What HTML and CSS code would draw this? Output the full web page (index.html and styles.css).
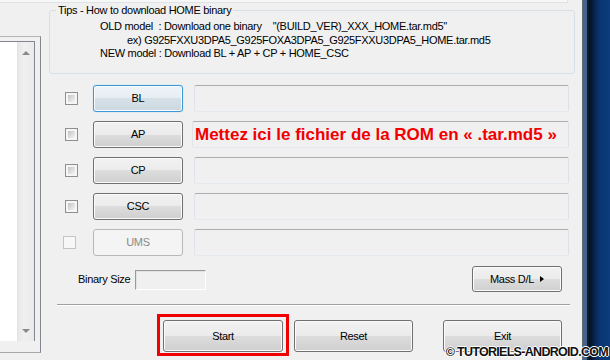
FILE: index.html
```html
<!DOCTYPE html>
<html lang="fr">
<head>
  <meta charset="UTF-8" />
  <title>Odin - Download</title>
  <link rel="stylesheet" href="styles.css">
</head>
<body>
  <div class="app">
    <div class="topbar"><div class="topfield"></div></div>

    <div class="panes">
      <div class="side">
        <div class="side-frame">
          <div class="listbox">
            <div class="list-body"></div>
            <div class="scrollbar">
              <span class="arrow up"></span>
              <span class="arrow down"></span>
            </div>
          </div>
        </div>
      </div>

      <div class="main">
        <fieldset class="tips">
          <legend>Tips - How to download HOME binary</legend>
          <div class="tip-line">OLD model  : Download one binary    "(BUILD_VER)_XXX_HOME.tar.md5"</div>
          <div class="tip-line indent">ex) G925FXXU3DPA5_G925FOXA3DPA5_G925FXXU3DPA5_HOME.tar.md5</div>
          <div class="tip-line">NEW model : Download BL + AP + CP + HOME_CSC</div>
        </fieldset>

        <div class="files">
          <div class="row">
            <span class="check"></span>
            <button class="btn focus">BL</button>
            <div class="field"></div>
          </div>
          <div class="row">
            <span class="check"></span>
            <button class="btn">AP</button>
            <div class="field note">Mettez ici le fichier de la ROM en « .tar.md5 »</div>
          </div>
          <div class="row">
            <span class="check"></span>
            <button class="btn">CP</button>
            <div class="field"></div>
          </div>
          <div class="row">
            <span class="check"></span>
            <button class="btn">CSC</button>
            <div class="field"></div>
          </div>
          <div class="row">
            <span class="check off"></span>
            <button class="btn" disabled>UMS</button>
            <div class="field"></div>
          </div>
        </div>

        <div class="options">
          <span class="label">Binary Size</span>
          <span class="size-box"></span>
          <button class="btn mass">Mass D/L<span class="tri"></span></button>
        </div>

        <div class="sep"></div>

        <div class="actions">
          <div class="highlight"><button class="btn big">Start</button></div>
          <button class="btn big reset">Reset</button>
          <button class="btn big exit">Exit</button>
        </div>
      </div>
    </div>
  </div>

  <div class="desktop"></div>

  <div class="watermark">© TUTORIELS-ANDROID.COM</div>
</body>
</html>
```

FILE: styles.css
```css
body {
  margin: 0;
  width: 610px;
  height: 360px;
  overflow: hidden;
  display: flex;
  background: #f0f0f0;
  font-family: 'Liberation Sans', Arial, sans-serif;
  font-size: 11px;
  letter-spacing: -0.3px;
  color: #000;
}

.app {
  width: 582px;
  display: flex;
  flex-direction: column;
}

.topbar {
  height: 3px;
}

.topfield {
  width: 568px;
  height: 3px;
  box-sizing: border-box;
  background: #f7f7f7;
  border-bottom: 1px solid #dfe3e8;
  border-right: 1px solid #dfe3e8;
}

.panes {
  flex: 1;
  display: flex;
}

/* left list, mostly cut off */
.side {
  width: 41px;
  padding-top: 33px;
}

.side-frame {
  height: 317px;
  box-sizing: border-box;
  border-top: 1px solid #b5b5b5;
  border-bottom: 1px solid #a7a7a7;
  border-right: 1px solid #828790;
  padding: 4px 5px 11px 0;
  display: flex;
}

.listbox {
  flex: 1;
  display: flex;
  border-top: 1px solid #828790;
  border-right: 1px solid #828790;
  background: #fff;
}

.list-body {
  flex: 1;
}

.scrollbar {
  width: 17px;
  background: linear-gradient(to right, #e8e8e8, #f0f0f0 40%, #eaeaea);
  border-left: 1px solid #e3e3e3;
  display: flex;
  flex-direction: column;
  justify-content: space-between;
  align-items: center;
  padding: 9px 0 8px;
  box-sizing: border-box;
}

.arrow {
  width: 0;
  height: 0;
  border-left: 4px solid transparent;
  border-right: 4px solid transparent;
}

.arrow.up {
  border-bottom: 4px solid #8a8a8a;
}

.arrow.down {
  border-top: 4px solid #8a8a8a;
}

.main {
  width: 541px;
  padding: 0 7px 0 8px;
  box-sizing: border-box;
}

/* tips group */
.tips {
  margin: 0;
  padding: 3px 0 12px;
  border: 1px solid #d5dfe5;
  border-radius: 3px;
}

.tips legend {
  margin-left: 6px;
  padding: 0 2px;
  line-height: 14px;
}

.tip-line {
  white-space: pre;
  line-height: 13.5px;
  padding-left: 50px;
}

.tip-line.indent {
  padding-left: 77px;
}

/* file rows */
.files {
  margin-top: 11px;
  display: flex;
  flex-direction: column;
  gap: 9px;
}

.row {
  height: 27px;
  display: flex;
  align-items: center;
}

.check {
  width: 13px;
  height: 13px;
  margin-left: 16px;
  box-sizing: border-box;
  border: 1px solid #8f8f8f;
  padding: 2px;
  background: linear-gradient(135deg, #c4c4c4, #f4f4f4) content-box, #f6f6f6;
}

.check.off {
  margin-left: 14px;
  margin-right: 2px;
  border-color: #c4c4c4;
  background: #f7f7f7;
}

.btn {
  font-family: 'Liberation Sans', Arial, sans-serif;
  font-size: 11px;
  letter-spacing: -0.3px;
  color: #000;
  padding: 0;
  border: 1px solid #707070;
  border-radius: 3px;
  background: linear-gradient(#f2f2f2, #ebebeb 50%, #dddddd 50%, #cfcfcf);
  box-shadow: inset 0 0 0 1px #fbfbfb;
}

.row .btn {
  width: 90px;
  height: 27px;
  margin-left: 15px;
}

.btn.focus {
  border-color: #3d98d8;
  background: linear-gradient(#eef4f8, #e6eef3 50%, #d6e0e7 50%, #ccd8e1);
  box-shadow: inset 0 0 0 1px #f7fbfd, 0 0 1px #7cc0ee;
}

.btn:disabled {
  border-color: #b5b9bc;
  background: #f4f4f4;
  color: #8a8a8a;
  box-shadow: none;
}

.field {
  width: 375px;
  height: 27px;
  margin-left: 11px;
  box-sizing: border-box;
  border: 1px solid;
  border-color: #abadb3 #dde1e7 #e3e9ef #e2e3ea;
  border-radius: 2px;
  background: #f0f0f0;
}

.field.note {
  margin-left: 9px;
  width: 377px;
  padding-left: 2px;
  color: #f20000;
  font-weight: bold;
  font-size: 17px;
  letter-spacing: 0;
  line-height: 25px;
  white-space: nowrap;
  overflow: hidden;
}

/* binary size + mass download */
.options {
  margin-top: 10px;
  height: 26px;
  display: flex;
  align-items: center;
  padding-left: 29px;
}

.label {
  width: 57px;
}

.size-box {
  width: 71px;
  height: 20px;
  margin-top: 2px;
  box-sizing: border-box;
  border: 1px solid;
  border-color: #9a9a9a #fdfdfd #fdfdfd #9a9a9a;
  box-shadow: inset 1px 1px 0 #e2e2e2;
}

.btn.mass {
  margin-left: auto;
  margin-right: 13px;
  width: 90px;
  height: 26px;
  display: flex;
  align-items: center;
  justify-content: center;
}

.tri {
  margin-left: 6px;
  width: 0;
  height: 0;
  border-left: 4px solid #000;
  border-top: 3px solid transparent;
  border-bottom: 3px solid transparent;
}

.sep {
  margin: 12px 5px 0 8px;
  border-top: 1px solid #a0a0a0;
  border-bottom: 1px solid #fff;
}

/* bottom buttons */
.actions {
  margin-top: 8px;
  padding-left: 108px;
  display: flex;
  align-items: flex-start;
}

.highlight {
  border: 3px solid #f00000;
  padding: 3px 3px 1px;
  display: flex;
}

.btn.big {
  width: 119px;
  height: 32px;
}

.highlight .btn.big {
  width: 120px;
}

.btn.reset {
  margin-top: 6px;
  margin-left: 5px;
}

.btn.exit {
  margin-top: 6px;
  margin-left: 30px;
}

/* desktop edge on the right */
.desktop {
  width: 28px;
  background: linear-gradient(to right, #5f6a75 0 1px, #43648b 1px 5px, #0f1c2c 5px 7px, #031021 7px, #0a3470 17px, #0c3c7c 28px);
}

.watermark {
  position: absolute;
  right: 2px;
  bottom: 1px;
  font-weight: bold;
  font-size: 12.5px;
  letter-spacing: -0.7px;
  color: #111;
  text-shadow: 1px 0 0 #fff, -1px 0 0 #fff, 0 1px 0 #fff, 0 -1px 0 #fff;
}
```
